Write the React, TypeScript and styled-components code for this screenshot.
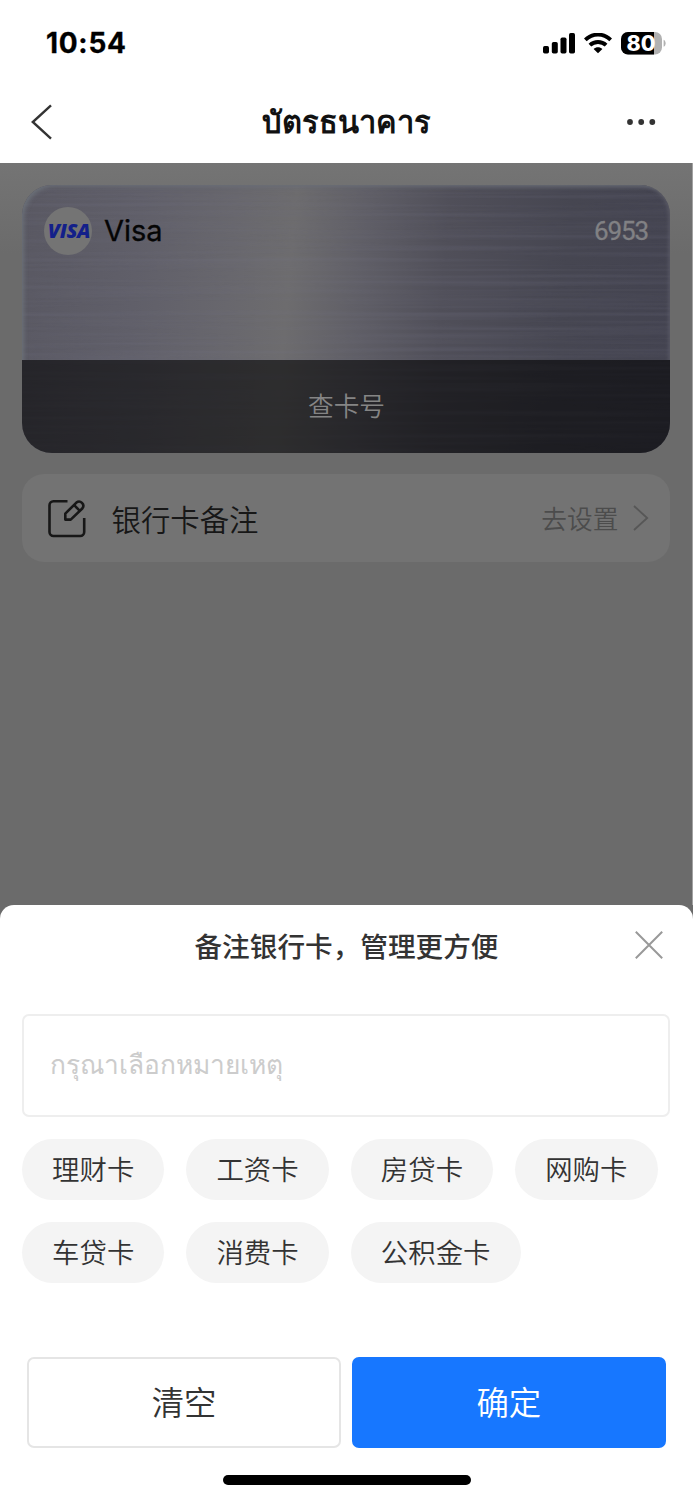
import React from "react";
import styled, { createGlobalStyle } from "styled-components";

const cjk = `"Noto Sans CJK SC", "Noto Sans", sans-serif`;

const GlobalStyle = createGlobalStyle`
  * { box-sizing: border-box; }
  body { margin: 0; background: #fff; font-family: ${cjk}; }
  button { font-family: inherit; }
`;

const Screen = styled.div`
  width: 693px;
  height: 1500px;
  display: flex;
  flex-direction: column;
  overflow: hidden;
  background: #6b6b6b;
`;

const Header = styled.header`
  height: 163px;
  flex: none;
  background: #fff;
`;

const StatusBar = styled.div`
  height: 81px;
  padding: 5px 27px 0 46px;
  display: flex;
  align-items: center;
  justify-content: space-between;
`;

const Clock = styled.time`
  font: 700 28px/30px Inter, sans-serif;
  letter-spacing: 0.7px;
  color: #000;
  -webkit-text-stroke: 0.3px #000;
`;

const StatusIcons = styled.div`
  display: flex;
  align-items: center;
`;

const NavBar = styled.nav`
  height: 81px;
  padding: 0 37px 0 30px;
  display: grid;
  grid-template-columns: 60px 1fr 53px;
  align-items: center;
`;

const NavTitle = styled.h1`
  margin: 0;
  padding-bottom: 4px;
  text-align: center;
  font: 600 30.8px/40px ${cjk};
  color: #111;
  white-space: nowrap;
`;

const NavButton = styled.button<{ $end?: boolean }>`
  border: 0;
  padding: 0;
  background: none;
  display: flex;
  justify-content: ${(p) => (p.$end ? "flex-end" : "flex-start")};
`;

const Content = styled.main`
  height: 742px;
  flex: none;
  padding: 22px 22px 0;
  border-right: 1px solid #a2a2a2;
  background: linear-gradient(#747474 0, #6b6b6b 90px);
`;

const BankCard = styled.section`
  width: 648.4px;
  height: 267.5px;
  border-radius: 30px;
  overflow: hidden;
  display: grid;
  grid-template-rows: 175px 92.5px;
  background: linear-gradient(95deg, #595862 0%, #605f69 18%, #68676d 32%, #6d6c6e 41%, #5f5e66 52%, #504f59 64%, #464651 82%, #434350 100%);
`;

const CardTexture = styled.svg`
  grid-area: 1 / 1 / 3 / 2;
  width: 649px;
  height: 268px;
`;

const CardTop = styled.div`
  grid-area: 1 / 1;
  z-index: 1;
  padding: 22px 23px 0 22px;
  display: flex;
  align-items: center;
  height: 70px;
`;

const CardSheen = styled.div`
  grid-area: 1 / 1;
  border-radius: 30px 30px 0 0;
  box-shadow: inset 4px 3px 4px -2px #6b7078, inset -4px 1px 4px -2px #5d5d68;
`;

const Brand = styled.span`
  width: 48px;
  height: 48px;
  border-radius: 50%;
  background: #747474;
  display: flex;
  align-items: center;
  justify-content: center;
  padding-left: 2px;
  font: italic 800 20px/20px "Open Sans", sans-serif;
  letter-spacing: -0.4px;
  color: #13208a;
`;

const CardName = styled.span`
  margin-left: 12px;
  padding-bottom: 1px;
  font: 400 29px/36px Inter, sans-serif;
  color: #050505;
  -webkit-text-stroke: 0.3px #050505;
`;

const CardDigits = styled.span`
  margin-left: auto;
  padding-bottom: 1px;
  font: 400 26px/36px Roboto, sans-serif;
  letter-spacing: -1.1px;
  color: #818184;
  -webkit-text-stroke: 0.3px #818184;
`;

const CardFooter = styled.div`
  grid-area: 2 / 1;
  z-index: 1;
  padding-bottom: 2px;
  display: flex;
  align-items: center;
  justify-content: center;
  background: rgba(0, 0, 0, 0.58);
  font: 350 25.7px/36px ${cjk};
  color: #858585;
`;

const NoteRow = styled.section`
  width: 648.4px;
  height: 88px;
  margin-top: 21.5px;
  padding: 0 21px 0 25px;
  border-radius: 22px;
  background: #737373;
  display: flex;
  align-items: center;
`;

const NoteLabel = styled.span`
  margin-left: 24.5px;
  padding-bottom: 1px;
  font: 350 29.4px/40px ${cjk};
  color: #171717;
`;

const NoteAction = styled.span`
  margin: 0 15px 0 auto;
  font: 350 25.7px/36px ${cjk};
  color: #4c4c4c;
`;

const Sheet = styled.section`
  flex: 1;
  border-radius: 14px 14px 0 0;
  background: #fff;
  display: flex;
  flex-direction: column;
  padding: 0 22px;
  color: #333;
`;

const SheetHead = styled.div`
  height: 109px;
  padding: 0 8px 29px;
  display: grid;
  grid-template-columns: 60px 1fr 60px;
  align-items: center;
`;

const SheetTitle = styled.h2`
  grid-column: 2;
  margin: 0;
  text-align: center;
  font: 500 27.65px/40px ${cjk};
`;

const NoteInput = styled.input`
  width: 648.4px;
  height: 103px;
  padding: 0 26px 6px;
  border: 2px solid #eee;
  border-radius: 7px;
  outline: 0;
  font: 400 26.3px/40px ${cjk};
  &::placeholder { color: #ccc; opacity: 1; }
`;

const Chips = styled.div`
  margin-top: 22px;
  display: flex;
  flex-wrap: wrap;
  gap: 22px;
`;

const Chip = styled.button`
  height: 61px;
  padding: 0 30.1px 4px;
  border: 0;
  border-radius: 31px;
  background: #f4f4f4;
  color: #333;
  font-size: 27.4px;
  font-weight: 350;
  line-height: 40px;
`;

const Actions = styled.div`
  margin: 74px 5px 0;
  display: flex;
  gap: 10.5px;
`;

const ActionButton = styled.button<{ $primary?: boolean }>`
  flex: 1;
  height: 90.5px;
  padding: 0 0 3px;
  border: 2px solid ${(p) => (p.$primary ? "#1777ff" : "#e5e5e5")};
  border-radius: 7px;
  background: ${(p) => (p.$primary ? "#1777ff" : "#fff")};
  color: ${(p) => (p.$primary ? "#fff" : "#333")};
  font-size: 32.4px;
  font-weight: 350;
`;

const HomeIndicator = styled.div`
  width: 248px;
  height: 10px;
  margin: 27.5px auto 0;
  border-radius: 5px;
  background: #000;
`;

const tags = ["理财卡", "工资卡", "房贷卡", "网购卡", "车贷卡", "消费卡", "公积金卡"];

function Signal() {
  return (
    <svg width="33" height="21" viewBox="0 0 33 21">
      <rect x="0" y="13" width="6" height="7.5" rx="1.7" />
      <rect x="8.8" y="9" width="6" height="11.5" rx="1.7" />
      <rect x="17.5" y="4.5" width="6" height="16" rx="1.7" />
      <rect x="26" y="0" width="6" height="20.5" rx="1.7" />
    </svg>
  );
}

function Wifi() {
  return (
    <svg width="28" height="21" viewBox="0 0 28 21">
      <g fill="none" stroke="#000" strokeWidth="3.9">
        <path d="M1.3 6.9C8.5-.2 19.5-.2 26.7 6.9" />
        <path d="M5.9 12.2C10.5 7.9 17.5 7.9 22.1 12.2" />
      </g>
      <path d="M14 20.3l-4.4-4.4c2.5-2.2 6.3-2.2 8.8 0z" />
    </svg>
  );
}

function Battery() {
  return (
    <svg width="45" height="23" viewBox="0 0 45 23">
      <defs>
        <clipPath id="charge"><rect width="33" height="23" /></clipPath>
      </defs>
      <rect width="41" height="22.5" rx="7" fill="#b1b1b1" />
      <rect width="41" height="22.5" rx="7" clipPath="url(#charge)" />
      <path d="M42.6 7.8c2.7 1 2.7 6 0 7z" fill="#b1b1b1" />
      <text x="20" y="18.6" textAnchor="middle" fontFamily="Inter" fontWeight="800" fontSize="21" textLength="29" lengthAdjust="spacingAndGlyphs" fill="#fff">80</text>
    </svg>
  );
}

const StatusGap = styled.span<{ $w: number }>`
  width: ${(p) => p.$w}px;
`;

export default function App() {
  return (
    <Screen>
      <GlobalStyle />
      <Header>
        <StatusBar>
          <Clock>10:54</Clock>
          <StatusIcons>
            <Signal />
            <StatusGap $w={8} />
            <Wifi />
            <StatusGap $w={9} />
            <Battery />
          </StatusIcons>
        </StatusBar>
        <NavBar>
          <NavButton aria-label="back">
            <svg width="23" height="36" viewBox="0 0 23 36" fill="none" stroke="#333" strokeWidth="2.4">
              <path d="M21 1.3L2.8 18 21 34.7" />
            </svg>
          </NavButton>
          <NavTitle>บัตรธนาคาร</NavTitle>
          <NavButton $end aria-label="more">
            <svg width="29" height="8" viewBox="0 0 29 8" fill="#333">
              <circle cx="3" cy="4" r="2.9" />
              <circle cx="14.2" cy="4" r="2.9" />
              <circle cx="25.3" cy="4" r="2.9" />
            </svg>
          </NavButton>
        </NavBar>
      </Header>
      <Content>
        <BankCard>
          <CardTexture>
            <filter id="brushed" x="0" y="0" width="100%" height="100%">
              <feTurbulence type="fractalNoise" baseFrequency="0.003 0.22" numOctaves="2" seed="8" />
              <feColorMatrix values="0 0 0 0 0.18  0 0 0 0 0.18  0 0 0 0 0.25  1.4 0 0 0 -0.55" />
            </filter>
            <rect width="649" height="268" filter="url(#brushed)" opacity="0.32" />
          </CardTexture>
          <CardSheen />
          <CardTop>
            <Brand>VISA</Brand>
            <CardName>Visa</CardName>
            <CardDigits>6953</CardDigits>
          </CardTop>
          <CardFooter>查卡号</CardFooter>
        </BankCard>
        <NoteRow>
          <svg width="40" height="40" viewBox="0 0 40 40" fill="none" stroke="#171717" strokeWidth="2.6" strokeLinejoin="round">
            <path d="M20.5 3.3H6.5a4 4 0 0 0-4 4v26.7a4 4 0 0 0 4 4h26.7a4 4 0 0 0 4-4V20" />
            <path d="M18.3 15.6L29.4 4.6a4.2 4.2 0 0 1 5.9 5.9L23.7 21.6H18.3z" />
            <path d="M27.2 7.2l5.4 5.4" />
          </svg>
          <NoteLabel>银行卡备注</NoteLabel>
          <NoteAction>去设置</NoteAction>
          <svg width="16" height="26" viewBox="0 0 16 26" fill="none" stroke="#575757" strokeWidth="1.8">
            <path d="M1 1l13.2 12L1 25" />
          </svg>
        </NoteRow>
      </Content>
      <Sheet>
        <SheetHead>
          <SheetTitle>备注银行卡，管理更方便</SheetTitle>
          <NavButton $end aria-label="close">
            <svg width="28" height="28" viewBox="0 0 28 28" fill="none" stroke="#999" strokeWidth="2">
              <path d="M.8.8l26.4 26.4M27.2.8L.8 27.2" />
            </svg>
          </NavButton>
        </SheetHead>
        <NoteInput placeholder="กรุณาเลือกหมายเหตุ" />
        <Chips>
          {tags.map((tag) => (
            <Chip key={tag}>{tag}</Chip>
          ))}
        </Chips>
        <Actions>
          <ActionButton>清空</ActionButton>
          <ActionButton $primary>确定</ActionButton>
        </Actions>
        <HomeIndicator />
      </Sheet>
    </Screen>
  );
}
